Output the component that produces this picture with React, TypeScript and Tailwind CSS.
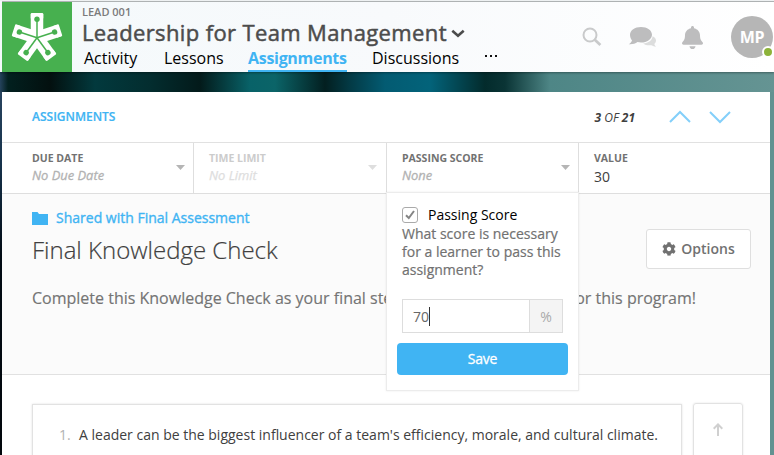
import React from "react";
import { FaCog, FaBell } from "react-icons/fa";

function Logo() {
  const arms = [0, 72, 144, 216, 288];
  return (
    <svg viewBox="0 0 70 70" className="size-[70px] shrink-0 bg-[#47b04f]" aria-label="Home">
      {arms.map((a) => (
        <path key={a} d="M35 35.700V12" stroke="white" strokeWidth="12.500" transform={`rotate(${a} 35 35.7)`} />
      ))}
      {arms.map((a) => (
        <rect key={a} x="28.750" y="11" width="12.500" height="6" rx="1" fill="white" transform={`rotate(${a} 35 35.7)`} />
      ))}
      {arms.map((a) => (
        <g key={a} transform={`rotate(${a} 35 35.7)`}>
          <path d="M35 35.700V18" stroke="#47b04f" strokeWidth="1.5" />
          <circle cx="35" cy="17.200" r="2.700" fill="#47b04f" />
        </g>
      ))}
    </svg>
  );
}

function Caret({ className }: { className: string }) {
  return (
    <svg viewBox="0 0 9 5" className={`h-[5px] w-[9px] ${className}`}>
      <path d="M0 0h9L4.5 5z" fill="currentColor" />
    </svg>
  );
}

function Header() {
  return (
    <header className="relative flex h-[72px] border-t border-[#eef1f2] bg-gradient-to-r from-[#f4f9fb] via-[#f8fafc] to-white pl-[2px] shadow-[0_1px_2px_rgba(0,0,0,0.35)]">
      <div className="flex grow border-t border-[#aeb2b3]">
        <Logo />
        <div className="flex flex-col pl-[10px]">
          <div className="mt-[3px] h-[14px] text-[11px] leading-[14px] font-semibold text-[#7b7b7b]">LEAD 001</div>
          <div className="flex h-[28px] items-center text-[22px] leading-[26px] whitespace-nowrap text-[#4c4c4c]">
            <span className="-mt-[3px] w-[366px] tracking-[0.37px] [-webkit-text-stroke:0.5px_#4c4c4c]">Leadership for Team Management</span>
            <svg viewBox="0 0 14 9" className="mt-[1px] ml-[3px] h-[9px] w-[14px]" fill="none" stroke="#4c4c4c" strokeWidth="2.6">
              <path d="M1.3 1.8 7 6.7 12.7 1.8" />
            </svg>
          </div>
          <nav className="flex h-[25px] pl-[2px] text-[16px] leading-[22px] whitespace-nowrap text-black">
            <span className="w-[80px]">Activity</span>
            <span className="w-[84px]">Lessons</span>
            <span className="mr-[25px] h-[25px] w-[99px] border-b-2 border-[#40b4f3] font-bold tracking-[-0.3px] text-[#40b4f3]">Assignments</span>
            <span className="w-[113px]">Discussions</span>
            <svg viewBox="0 0 12 2" className="mt-[8px] h-[2px] w-[12px]" fill="#111">
              <path d="M0 0h2v2H0zM5 0h2v2H5zM10 0h2v2h-2z" />
            </svg>
          </nav>
        </div>
        <div className="ml-auto flex h-[70px] items-center">
          <svg viewBox="0 0 20 20" className="mr-[26px] size-[20px]" fill="none" stroke="#c9cacb">
            <circle cx="8" cy="8" r="6.5" strokeWidth="2" />
            <path d="m12.8 12.8 5.6 5.2" strokeWidth="2.8" />
          </svg>
          <svg viewBox="0 0 30 21" className="mr-[24px] h-[21px] w-[30px]">
            <path d="M24.5 9.2c2.200.9 3.500 2.400 3.500 4.200 0 1.500-.8 2.600-1.700 3.500.2 1 .8 1.900 1.800 2.700-1.800 0-3.300-.5-4.600-1.400-3.300.5-6.500-.2-8.300-1.800 5.200-.4 9.200-3.200 9.300-7.200z" fill="#dcdddd" />
            <path d="M13 0c6.100 0 11 3.400 11 7.700s-4.900 7.800-11 7.800c-1.200 0-2.400-.1-3.500-.4C7.300 16.800 3.900 17.500.8 17.200c1.600-1 2.800-2.400 3.200-4C2.700 11.900 2 9.900 2 7.700 2 3.400 6.900 0 13 0z" fill="#bdbdbe" />
          </svg>
          <FaBell className="mr-[28px] h-[23px] w-[21px] text-[#bdbdbe]" preserveAspectRatio="none" />
          <div className="relative flex size-[42px] items-center justify-center rounded-full bg-[#b6b6b6] text-[16px] font-bold tracking-[-0.2px] text-white">
            MP
            <span className="absolute right-[-1px] bottom-0 size-[12px] rounded-full border-2 border-white bg-[#8db33a]" />
          </div>
          <div className="w-px" />
        </div>
      </div>
    </header>
  );
}

function SettingCell({ label, value, muted }: { label: string; value: string; muted?: boolean }) {
  return (
    <div className="flex h-full grow items-start">
      <div className={muted ? "text-[#cccccc]" : "text-[#727272]"}>
        <div className="mt-[8px] text-[10.500px] leading-[14px] font-bold">{label}</div>
        <div className={`mt-[2px] text-[12.900px] leading-[17px] italic ${muted ? "text-[#dedede] [-webkit-text-stroke:0.25px_#dedede]" : "text-[#b2b2b2] [-webkit-text-stroke:0.3px_#b2b2b2]"}`}>{value}</div>
      </div>
      <Caret className={`mt-[22px] ml-auto ${muted ? "text-[#dedede]" : "text-[#b5b5b5]"}`} />
    </div>
  );
}

function ScorePopover() {
  return (
    <div className="absolute top-[49px] left-[-1px] z-10 h-[199px] w-[193px] border border-[#ececec] bg-white px-[10px] pt-[12px] shadow-[0_0_2px_rgba(0,0,0,0.08)]">
      <div className="flex items-center pl-[5px] text-[14px] leading-[19px] text-black">
        <span className="mr-[10px] flex size-[16px] items-center justify-center rounded-[3px] border border-[#aaaaaa] bg-white">
          <svg viewBox="0 0 10 10" className="size-[10px]" fill="none" stroke="#858585" strokeWidth="2">
            <path d="m1 5.200 2.800 2.800L9 1" />
          </svg>
        </span>
        Passing Score
      </div>
      <div className="mt-px pl-[5px] text-[14px] leading-[18px] whitespace-nowrap text-[#717171] [-webkit-text-stroke:0.2px_#717171]">
        What score is necessary
        <br />
        for a learner to pass this
        <br />
        assignment?
      </div>
      <div className="mt-[20px] ml-[5px] flex h-[34px] w-[161px] border border-[#dddddd] text-[14px]">
        <div className="flex grow items-center pl-[10px] text-[#686868]">
          70
          <span className="h-[19px] w-px bg-[#333]" />
        </div>
        <div className="flex w-[33px] items-center justify-center border-l border-[#dddddd] bg-[#f4f4f4] text-[#aaaaaa]">%</div>
      </div>
      <div className="mt-[10px] flex h-[32px] w-[171px] items-center justify-center rounded-[4px] bg-[#40b4f3] pb-px text-[14px] tracking-[-0.2px] text-white [-webkit-text-stroke:0.3px_white]">Save</div>
    </div>
  );
}

export default function App() {
  return (
    <div className="flex h-[455px] w-[774px] flex-col overflow-hidden bg-[linear-gradient(90deg,#24425c_0px,#02201f_8px,#03100f_50px,#02393d_95px,#032d2f_150px,#031a1a_200px,#086268_250px,#0b6468_275px,#031f20_325px,#033a45_350px,#035b72_385px,#03637a_430px,#032b2c_485px,#0a3435_505px,#4e8686_550px,#659493_774px)] font-['Open_Sans','Noto_Sans',sans-serif]">
      <Header />
      <div className="h-[20px] shrink-0" />
      <div className="flex h-[363px] bg-[linear-gradient(#29445f,#16324b_20%,#020b14_45%,#02070c)]">
        <main className="ml-[2px] flex w-[768px] flex-col bg-white">
          <div className="flex h-[51px] shrink-0 items-center border-b border-[#e1e1e1] pr-[39px] pl-[30px]">
            <span className="text-[12px] font-semibold text-[#40b4f3] [-webkit-text-stroke:0.2px_#40b4f3]">ASSIGNMENTS</span>
            <span className="mt-px ml-auto text-[12px] text-[#404040] italic"><b>3</b> OF <b>21</b></span>
            <svg viewBox="0 0 62 14" className="ml-[34px] h-[14px] w-[62px]" fill="none" stroke="#83cffa" strokeWidth="2">
              <path d="m1 12 10-10 10 10M41 2l10 10L61 2" />
            </svg>
          </div>
          <div className="flex h-[51px] shrink-0 border-b border-[#dedede]">
            <div className="flex w-[192px] border-r border-[#dedede] pr-[8px] pl-[30px]"><SettingCell label="DUE DATE" value="No Due Date" /></div>
            <div className="flex w-[193px] border-r border-[#dedede] pr-[9px] pl-[15px]"><SettingCell label="TIME LIMIT" value="No Limit" muted /></div>
            <div className="relative flex w-[192px] border-r border-[#dedede] pr-[8px] pl-[15px]">
              <SettingCell label="PASSING SCORE" value="None" />
              <ScorePopover />
            </div>
            <div className="pl-[15px]">
              <div className="mt-[8px] text-[10.500px] leading-[14px] font-bold text-[#727272]">VALUE</div>
              <div className="mt-[2px] text-[14px] leading-[20px] text-[#404040]">30</div>
            </div>
          </div>
          <section className="flex h-[181px] shrink-0 justify-between border-b border-[#e1e1e1] bg-[#fbfbfb] pr-[19px] pl-[30px]">
            <div className="w-0 whitespace-nowrap">
              <div className="mt-[14px] flex h-[20px] w-[220px] items-center text-[14px] text-[#40b4f3] [-webkit-text-stroke:0.35px_#40b4f3]">
                <svg viewBox="0 0 16 13" className="mr-[8px] h-[13px] w-[16px] shrink-0" fill="currentColor" strokeWidth="0">
                  <path d="M0 0h5.500l1.500 2h9v11H0z" />
                </svg>
                <span className="-mt-[2px]">Shared with Final Assessment</span>
              </div>
              <h1 className="mt-[5px] text-[24px] leading-[34px] font-light text-[#404040] [-webkit-text-stroke:0.2px_#404040]">Final Knowledge Check</h1>
              <p className="mt-[21px] flex w-[664px] justify-between text-[16px] leading-[20px] text-[#747474] [-webkit-text-stroke:0.15px_#747474]">
                <span>Complete this Knowledge Check as your final step to earn credit</span>
                <span>for this program!</span>
              </p>
            </div>
            <button className="mt-[35px] flex h-[40px] w-[105px] items-center justify-center rounded-[3px] border border-[#dfdfdf] bg-white pb-px text-[14px] font-semibold text-[#717171]">
              <FaCog className="mr-[5px] size-[14px]" />
              Options
            </button>
          </section>
          <div className="flex grow items-start pl-[30px]">
            <div className="mt-[29px] flex h-[60px] w-[650px] border border-[#e2e2e2] pt-[20px] pl-[26px] text-[14px] leading-[20px] whitespace-nowrap text-[#404040] shadow-[0_0_2px_rgba(0,0,0,0.12)]">
              <span className="w-[20px] text-[#b2b2b2]">1.</span>
              <span>A leader can be the biggest influencer of a team&#39;s efficiency, morale, and cultural climate.</span>
            </div>
            <div className="mt-[28px] ml-[11px] flex h-[60px] w-[50px] justify-center rounded-[3px] border border-[#e2e2e2] pt-[19px] shadow-[0_0_2px_rgba(0,0,0,0.12)]">
              <svg viewBox="0 0 10 13" className="h-[13px] w-[10px]" fill="none" stroke="#d0d0d0" strokeWidth="2">
                <path d="M5 13V1M.7 5.700 5 1.400l4.300 4.300" />
              </svg>
            </div>
          </div>
        </main>
        <div className="grow bg-[#629291]" />
      </div>
    </div>
  );
}
